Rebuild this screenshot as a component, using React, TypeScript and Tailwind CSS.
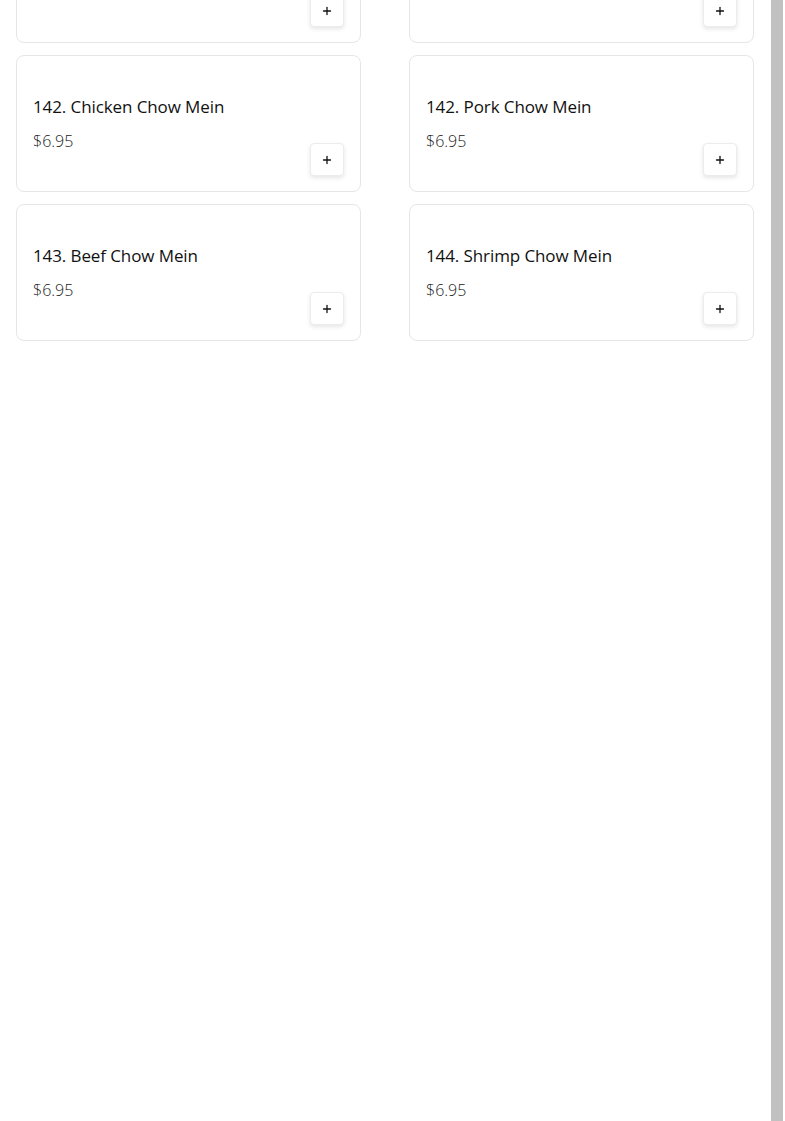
import { Plus } from "lucide-react";

interface Dish {
  name: string;
  price: string;
}

const dishes: Dish[] = [
  { name: "140. Vegetable Chow Mein", price: "$6.95" },
  { name: "141. House Chow Mein", price: "$6.95" },
  { name: "142. Chicken Chow Mein", price: "$6.95" },
  { name: "142. Pork Chow Mein", price: "$6.95" },
  { name: "143. Beef Chow Mein", price: "$6.95" },
  { name: "144. Shrimp Chow Mein", price: "$6.95" },
];

function DishCard({ dish }: { dish: Dish }) {
  return (
    <div className="h-[137px] flex justify-between px-4 pt-[39px] pb-[15px] bg-white border border-[#e6e6e6] rounded-lg">
      <div className="self-start">
        <p className="text-[17px] leading-6 font-medium text-[#111] tracking-[-0.1px]">
          {dish.name}
        </p>
        <p className="mt-[10px] text-base leading-6 font-light text-[#1a1a1a]">
          {dish.price}
        </p>
      </div>
      <button className="self-end w-[34px] h-[33px] flex items-center justify-center bg-white border border-[#ececec] rounded-[4px] shadow-[0_2px_4px_rgba(0,0,0,0.1)]">
        <Plus className="w-3 h-3 text-[#111]" strokeWidth={2.6} />
      </button>
    </div>
  );
}

export default function App() {
  return (
    <div
      className="h-[1121px] w-[785px] flex bg-white overflow-hidden"
      style={{ fontFamily: '"Open Sans", "Liberation Sans", sans-serif' }}
    >
      {/* menu items */}
      <div className="w-[771px] pl-4 pr-[17px] overflow-hidden">
        <div className="-mt-[94px] grid grid-cols-2 gap-x-12 gap-y-3">
          {dishes.map((d) => (
            <DishCard key={d.name} dish={d} />
          ))}
        </div>
      </div>

      {/* scrollbar */}
      <div className="w-[12px] h-full bg-[#c1c1c1]" />
    </div>
  );
}
